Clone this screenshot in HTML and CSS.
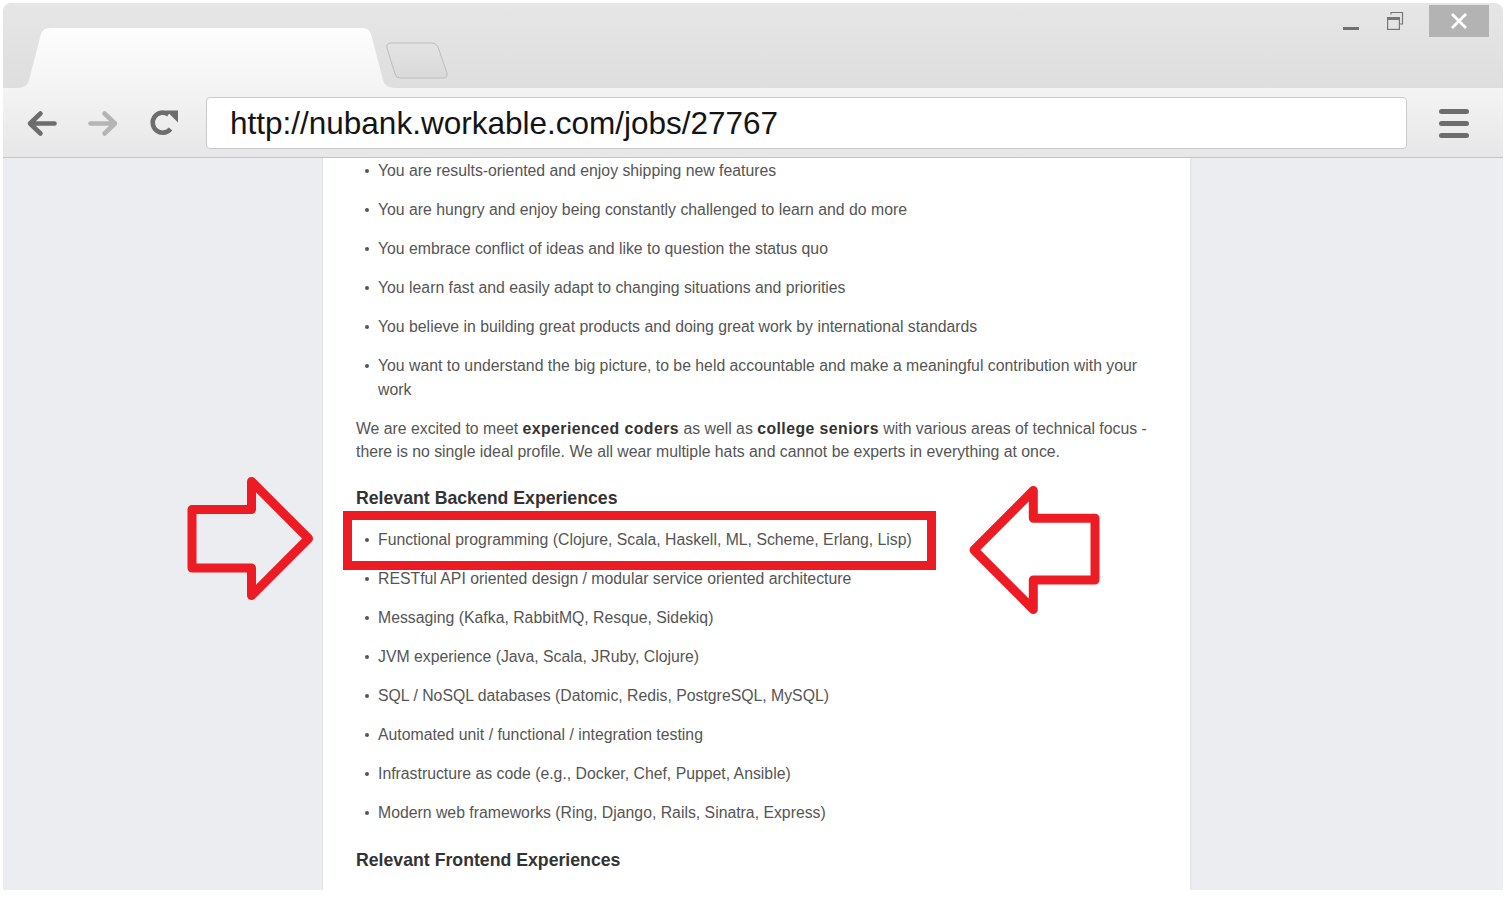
FILE: index.html
```html
<!DOCTYPE html>
<html lang="en">
<head>
<meta charset="utf-8">
<title>Nubank - Workable</title>
<link rel="stylesheet" href="styles.css">
</head>
<body>
<div class="window">
  <div class="titlebar">
    <svg class="tabs" width="460" height="85" viewBox="0 0 460 85">
      <defs>
        <linearGradient id="tabg" x1="0" y1="0" x2="0" y2="1">
          <stop offset="0" stop-color="#fdfdfd"/>
          <stop offset="1" stop-color="#f4f4f4"/>
        </linearGradient>
        <linearGradient id="ntg" x1="0" y1="0" x2="0" y2="1">
          <stop offset="0" stop-color="#e4e4e4"/>
          <stop offset="1" stop-color="#d9d9d9"/>
        </linearGradient>
      </defs>
      <path d="M14 85 Q24 85 26 77 L38 31 Q40 25 47 25 L360 25 Q366 25 368 31 L380 77 Q382 85 392 85 Z" fill="url(#tabg)"/>
      <path d="M388 40 L429 40 Q433 40 435 44 L444 70 Q445 75 440 75 L397 75 Q393 75 392 71 L384 45 Q383 40 388 40 Z" fill="url(#ntg)" stroke="#bdbdbd" stroke-width="1"/>
    </svg>
    <div class="controls">
      <svg class="ctl-min" width="16" height="32" viewBox="0 0 16 32"><rect x="0" y="22" width="16" height="3" fill="#6f6f6f"/></svg>
      <svg class="ctl-max" width="18" height="32" viewBox="0 0 18 32">
        <path d="M5 9.5 V7.5 H16.5 V19 H14" fill="none" stroke="#777" stroke-width="1.2"/>
        <rect x="1.6" y="12.6" width="11.8" height="11.8" fill="none" stroke="#777" stroke-width="1.2"/>
        <rect x="1.6" y="12.6" width="11.8" height="2.4" fill="#777"/>
      </svg>
      <div class="ctl-close">
        <svg width="16" height="16" viewBox="0 0 16 16"><path d="M2 2 L14 14 M14 2 L2 14" stroke="#fff" stroke-width="2.8" stroke-linecap="square"/></svg>
      </div>
    </div>
  </div>
  <div class="toolbar">
    <svg class="nav" width="200" height="69" viewBox="0 0 200 69">
      <g fill="none" stroke-width="4.6" stroke-linecap="round" stroke-linejoin="round">
        <path d="M51.5 35.5 H27.5 M37.5 25.5 L27 35.5 L37.5 45.5" stroke="#6d6d6d"/>
        <path d="M87.5 35.5 H111.5 M101.5 25.5 L112 35.5 L101.5 45.5" stroke="#b5b5b5"/>
        <path d="M167.5 41 A10 10 0 1 1 165.5 26.5" stroke="#6d6d6d" stroke-linecap="butt"/>
      </g>
      <polygon points="163,22.5 175,22.5 175,34.5" fill="#6d6d6d"/>
    </svg>
    <div class="omnibox">http://nubank.workable.com/jobs/27767</div>
    <svg class="menu" width="32" height="32" viewBox="0 0 32 32">
      <rect x="1" y="3" width="30" height="5" rx="2.5" fill="#6d6d6d"/>
      <rect x="1" y="15" width="30" height="5" rx="2.5" fill="#6d6d6d"/>
      <rect x="1" y="27" width="30" height="5" rx="2.5" fill="#6d6d6d"/>
    </svg>
  </div>
  <div class="viewport">
    <div class="page">
      <ul class="list">
        <li>You are results-oriented and enjoy shipping new features</li>
        <li>You are hungry and enjoy being constantly challenged to learn and do more</li>
        <li>You embrace conflict of ideas and like to question the status quo</li>
        <li>You learn fast and easily adapt to changing situations and priorities</li>
        <li>You believe in building great products and doing great work by international standards</li>
        <li>You want to understand the big picture, to be held accountable and make a meaningful contribution with your work</li>
      </ul>
      <p class="para">We are excited to meet <b>experienced coders</b> as well as <b>college seniors</b> with various areas of technical focus - there is no single ideal profile. We all wear multiple hats and cannot be experts in everything at once.</p>
      <h3 class="heading">Relevant Backend Experiences</h3>
      <ul class="list">
        <li>Functional programming (Clojure, Scala, Haskell, ML, Scheme, Erlang, Lisp)</li>
        <li>RESTful API oriented design / modular service oriented architecture</li>
        <li>Messaging (Kafka, RabbitMQ, Resque, Sidekiq)</li>
        <li>JVM experience (Java, Scala, JRuby, Clojure)</li>
        <li>SQL / NoSQL databases (Datomic, Redis, PostgreSQL, MySQL)</li>
        <li>Automated unit / functional / integration testing</li>
        <li>Infrastructure as code (e.g., Docker, Chef, Puppet, Ansible)</li>
        <li>Modern web frameworks (Ring, Django, Rails, Sinatra, Express)</li>
      </ul>
      <h3 class="heading">Relevant Frontend Experiences</h3>
    </div>
  </div>
</div>
<svg class="annotations" width="1505" height="898" viewBox="0 0 1505 898">
  <g fill="none" stroke="#ed1c24" stroke-width="9">
    <rect x="347.5" y="515.5" width="584" height="50" stroke-linejoin="miter"/>
    <polygon points="192,509.5 251.5,509.5 251.5,481.5 308.5,538.5 251.5,595.5 251.5,568 192,568" stroke-linejoin="round"/>
    <polygon points="1095,518.3 1033.3,518.3 1033.3,490.5 974,550 1033.3,609.5 1033.3,580 1095,580" stroke-linejoin="round"/>
  </g>
</svg>
</body>
</html>
```
FILE: styles.css
```css
html, body {
  margin: 0;
  padding: 0;
  background: #ffffff;
}

body {
  position: relative;
  width: 1505px;
  height: 898px;
  overflow: hidden;
  font-family: "Liberation Sans", Arial, sans-serif;
}

.window {
  margin: 3px 0 0 3px;
  width: 1500px;
  height: 887px;
  display: flex;
  flex-direction: column;
  overflow: hidden;
  border-radius: 8px 8px 0 0;
}

.titlebar {
  height: 85px;
  flex: none;
  display: flex;
  justify-content: space-between;
  background: linear-gradient(#e6e6e6, #dedede);
}

.tabs {
  display: block;
  flex: none;
}

.controls {
  display: flex;
  align-items: flex-start;
  margin: 2px 14px 0 0;
}

.ctl-min,
.ctl-max {
  display: block;
  flex: none;
}

.ctl-min {
  margin-right: 27px;
}

.ctl-max {
  margin-right: 25px;
}

.ctl-close {
  width: 60px;
  height: 32px;
  background: #b3b3b3;
  display: flex;
  align-items: center;
  justify-content: center;
}

.ctl-close svg {
  display: block;
}

.toolbar {
  height: 69px;
  flex: none;
  display: flex;
  align-items: flex-start;
  background: linear-gradient(#f4f4f4, #e7e7e7);
  border-bottom: 1px solid #c4c4c4;
}

.nav {
  display: block;
  flex: none;
}

.omnibox {
  margin: 9px 0 0 3px;
  width: 1201px;
  height: 52px;
  box-sizing: border-box;
  background: #ffffff;
  border: 1px solid #c9c9c9;
  border-radius: 4px;
  padding-left: 23px;
  font-size: 31.5px;
  line-height: 50px;
  color: #141414;
  white-space: nowrap;
}

.menu {
  display: block;
  flex: none;
  margin: 18px 0 0 31px;
}

.viewport {
  flex: 1;
  background: #ecedf1;
  overflow: hidden;
  padding-left: 319px;
}

.page {
  width: 868px;
  height: 100%;
  box-sizing: border-box;
  background: #ffffff;
  border-left: 1px solid #e0e1e5;
  box-shadow: 1px 0 2px rgba(0, 0, 0, 0.05);
  padding: 1px 34px 0 33px;
  color: #555555;
  font-size: 15.8px;
  line-height: 23.5px;
}

.list {
  list-style: none;
  margin: 0;
  padding: 0;
}

.list li {
  display: flex;
  margin-bottom: 15.5px;
}

.list li::before {
  content: "";
  flex: none;
  width: 4.5px;
  height: 4.5px;
  border-radius: 50%;
  background: #555555;
  margin: 9.75px 8.75px 0 8.75px;
}

.para {
  margin: 0;
  line-height: 23px;
}

.para b {
  color: #333333;
  letter-spacing: 0.45px;
}

.heading {
  margin: 23.5px 0 18px;
  font-size: 17.7px;
  line-height: 24px;
  font-weight: bold;
  color: #333333;
}

.annotations {
  position: absolute;
  left: 0;
  top: 0;
  pointer-events: none;
}
```
